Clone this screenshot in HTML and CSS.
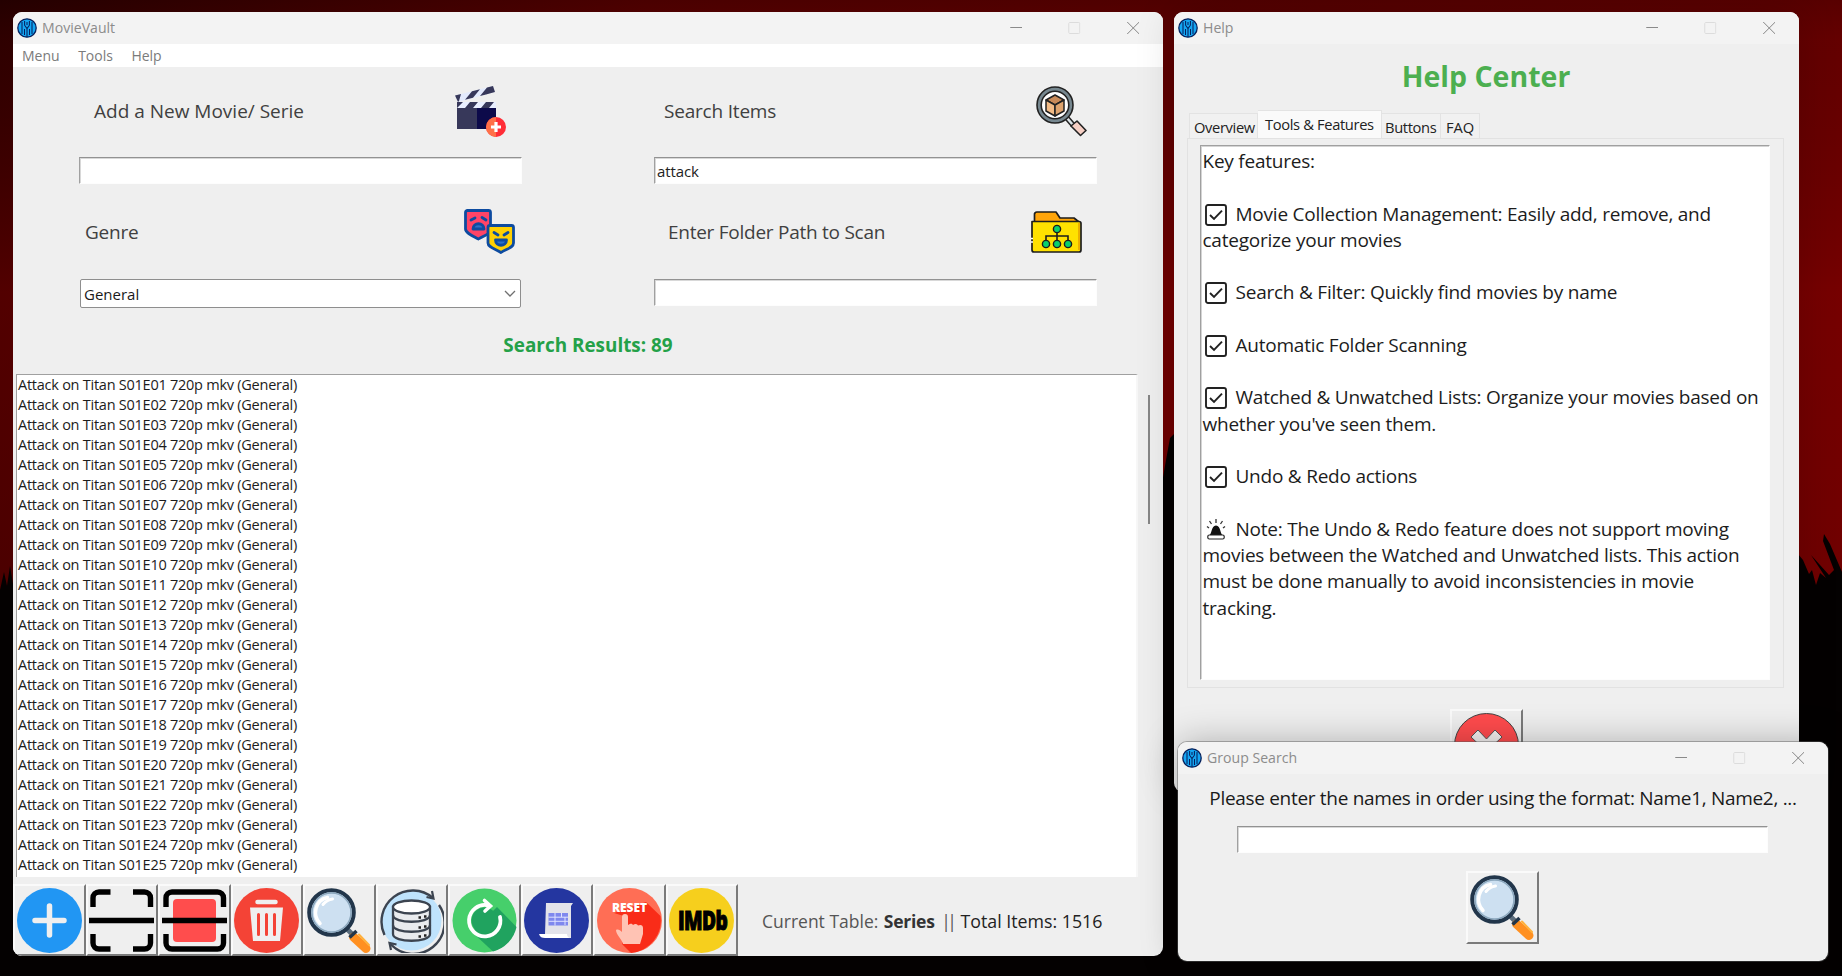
FILE: index.html
```html
<!DOCTYPE html>
<html lang="en">
<head>
<meta charset="utf-8">
<title>MovieVault</title>
<link rel="stylesheet" href="styles.css">
</head>
<body>
<svg class="wallpaper" viewBox="0 0 1842 976" preserveAspectRatio="none">
  <defs>
    <linearGradient id="sky" x1="0" x2="1" y1="0" y2="0"><stop offset="0" stop-color="#290000"/><stop offset=".35" stop-color="#540000"/><stop offset="1" stop-color="#640000"/></linearGradient>
    <linearGradient id="shade" x1="0" x2="0" y1="0" y2="1"><stop offset="0" stop-color="#000" stop-opacity=".12"/><stop offset=".04" stop-color="#600000" stop-opacity=".1"/><stop offset=".3" stop-color="#900000" stop-opacity=".4"/><stop offset=".6" stop-color="#800000" stop-opacity=".4"/></linearGradient>
  </defs>
  <rect width="1842" height="976" fill="url(#sky)"/>
  <rect width="1842" height="976" fill="url(#shade)"/>
  <path fill="#040101" d="M0 976V590L4 572 7 586 10 566 14 590H1160V495L1166 460 1170 438 1176 432V554H1798L1803 560 1809 574 1812 570 1816 585 1820 573 1826 578 1811 555 1829 575 1834 570 1823 541 1824 534 1830 544 1842 572V976z"/>
</svg>

<svg class="defs" width="0" height="0">
  <symbol id="logo" viewBox="0 0 20 20">
    <circle cx="10" cy="10" r="9.200" fill="#14a5f2" stroke="#06205c" stroke-width="1.300"/>
    <path d="M5 4v12M7.600 3v4.200L10 10.500l2.400-3.300V3M15 4v12M10 10.500V19M10 4v3M7.500 11v6M12.500 11v6" fill="none" stroke="#06205c" stroke-width="1.050"/>
  </symbol>
  <symbol id="min" viewBox="0 0 12 12"><path d="M0 5.500h12" stroke="#8a8a8a" fill="none"/></symbol>
  <symbol id="max" viewBox="0 0 12 12"><rect x=".5" y=".5" width="11" height="11" rx="1" stroke="#dcdcdc" fill="none"/></symbol>
  <symbol id="close" viewBox="0 0 12 12"><path d="M0 0l12 12M12 0L0 12" stroke="#858585" fill="none"/></symbol>
  <symbol id="check" viewBox="0 0 22 22"><rect x="1" y="1" width="20" height="20" rx="2" fill="#fff" stroke="#222" stroke-width="1.900"/><path d="M5 11l4 4 8-8.400" fill="none" stroke="#222" stroke-width="1.900"/></symbol>
  <symbol id="lens" viewBox="0 0 65 65">
    <path d="M40 41l7 7" stroke="#5b6d7d" stroke-width="5"/>
    <path d="M46.500 49L59 60.500" stroke="#ff9021" stroke-width="9" stroke-linecap="round"/>
    <path d="M42.500 49.500l7-6.500" stroke="#22364b" stroke-width="3.500"/>
    <path d="M52 46.500l10 10.500" stroke="#ffb13c" stroke-width="2" fill="none" stroke-linecap="round"/>
    <circle cx="24.500" cy="24.500" r="22.300" fill="#cde0f1" stroke="#22364b" stroke-width="4"/>
    <circle cx="24.500" cy="24.500" r="19.500" fill="none" stroke="#8ba7bd" stroke-width="1.500"/>
    <path d="M13 35.500C5 27 8 12 20.500 9.500" stroke="#fff" stroke-width="3.500" fill="none" stroke-linecap="round"/>
    <path d="M16 16.500c2.500-3 6-5 9.500-5.500" stroke="#fff" stroke-width="3" fill="none" stroke-linecap="round"/>
  </symbol>
</svg>

<main class="window main-window">
  <header class="titlebar">
    <svg class="logo"><use href="#logo"/></svg><span class="title">MovieVault</span>
    <div class="controls"><svg><use href="#min"/></svg><svg><use href="#max"/></svg><svg><use href="#close"/></svg></div>
  </header>
  <nav class="menubar"><span>Menu</span><span>Tools</span><span>Help</span></nav>

  <section class="form">
    <div class="column">
      <div class="field-head add"><label>Add a New Movie/ Serie</label>
        <svg width="51" height="51" viewBox="0 0 51 51">
          <path d="M2 21h39v22H2z" fill="#37385a"/><path d="M22 21h19v22H22z" fill="#0c0a4a"/>
          <path d="M2 16h39v6H2z" fill="#e9efff"/>
          <path d="M2 22v-6h6zM10 22l5-6h8l-5 6zM26 22l5-6h8l-5 6z" fill="#37385a"/>
          <path d="M0 9.500L38 0l2 6L3 16z" fill="#e3eafd"/>
          <path d="M0 9.500l6-1.500-2 7-1 1zM17 5.200l8-2-7 8.500-8 2zM32 1.500L38 0l2 6-9 2.500-6 1.500z" fill="#37385a"/>
          <circle cx="41" cy="41" r="10" fill="#ff2d37"/><path d="M41 31a10 10 0 0 0 0 20z" fill="#ff7048"/>
          <path d="M41 36v10M36 41h10" stroke="#fff" stroke-width="3.200"/>
        </svg>
      </div>
      <div class="entry"></div>
      <div class="field-head genre"><label>Genre</label>
        <svg width="51" height="45" viewBox="0 0 51 45">
          <g stroke="#0d4ba0" stroke-width="2.800" stroke-linejoin="round" stroke-linecap="round">
            <path d="M3.500 1.500h21a2 2 0 0 1 2 2V22c0 3-8 5-12 8C9 27 1.500 24 1.500 20V3.500a2 2 0 0 1 2-2z" fill="#ff4467"/>
            <path d="M7 11l4-2M18 8.500l4 2.500" fill="none"/><path d="M9 20c0-7 11-7 11 0z" fill="#2a70c8"/>
            <path d="M26 16.500h21.500a2 2 0 0 1 2 2V34c0 5-8 6-12.500 9.500C32 40 24 38.500 24 34V18.500a2 2 0 0 1 2-2z" fill="#ffd002"/>
            <path d="M30 23.500l4 2.500M44 23.500L40 26" fill="none"/><path d="M31.500 31h11c0 7-11 7-11 0z" fill="#2a70c8"/>
          </g>
        </svg>
      </div>
      <div class="combo"><span>General</span><svg width="12" height="8" viewBox="0 0 12 8"><path d="M1 1l5 5 5-5" fill="none" stroke="#707070" stroke-width="1.300"/></svg></div>
    </div>
    <div class="column">
      <div class="field-head search"><label>Search Items</label>
        <svg width="51" height="51" viewBox="0 0 51 51">
          <path d="M31 32l6 7" stroke="#222" stroke-width="5.500"/><path d="M31 32l6 7" stroke="#dfe6ea" stroke-width="2.500"/>
          <path d="M35 40l6-5 9 9.500-5.500 5z" fill="#f6cfc4" stroke="#222" stroke-width="1.600" stroke-linejoin="round"/>
          <circle cx="19" cy="19" r="18" fill="#76878f" stroke="#222" stroke-width="1.600"/>
          <circle cx="19" cy="19" r="13.800" fill="#fff" stroke="#222" stroke-width="1.600"/>
          <g stroke="#222" stroke-width="1.500" stroke-linejoin="round"><path d="M10 14l9-5 9 5-9 5z" fill="#c98a58"/><path d="M10 14l9 5v11l-9-5z" fill="#f2bb86"/><path d="M28 14l-9 5v11l9-5z" fill="#dda36e"/></g>
        </svg>
      </div>
      <div class="entry">attack</div>
      <div class="field-head path"><label>Enter Folder Path to Scan</label>
        <svg width="51" height="42" viewBox="0 0 51 42">
          <path d="M3.500 10V4a2.500 2.500 0 0 1 2.500-3h19l4 6h14l5 4v5H3.500z" fill="#ffa50a" stroke="#1d1d1d" stroke-width="1.700" stroke-linejoin="round"/>
          <path d="M1 10.500h47a2 2 0 0 1 2 2V39a2 2 0 0 1-2 2H3a2 2 0 0 1-2-2z" fill="#ffe100" stroke="#1d1d1d" stroke-width="1.700" stroke-linejoin="round"/>
          <path d="M48 12v27" stroke="#e8a300" stroke-width="1.600"/><path d="M0 27.500h2M0 31h2" stroke="#fff" stroke-width="1.600"/>
          <path d="M26 19v12M15 31v-6h22v6" fill="none" stroke="#1d1d1d" stroke-width="1.600"/>
          <g fill="#08d06c" stroke="#1d1d1d" stroke-width="1.400"><circle cx="26" cy="18" r="3.600"/><circle cx="15" cy="33" r="3.600"/><circle cx="26" cy="33" r="3.600"/><circle cx="37" cy="33" r="3.600"/></g>
        </svg>
      </div>
      <div class="entry"></div>
    </div>
  </section>

  <div class="result-count">Search Results: 89</div>

  <section class="results">
    <ul class="list">
      <li>Attack on Titan S01E01 720p mkv (General)</li>
      <li>Attack on Titan S01E02 720p mkv (General)</li>
      <li>Attack on Titan S01E03 720p mkv (General)</li>
      <li>Attack on Titan S01E04 720p mkv (General)</li>
      <li>Attack on Titan S01E05 720p mkv (General)</li>
      <li>Attack on Titan S01E06 720p mkv (General)</li>
      <li>Attack on Titan S01E07 720p mkv (General)</li>
      <li>Attack on Titan S01E08 720p mkv (General)</li>
      <li>Attack on Titan S01E09 720p mkv (General)</li>
      <li>Attack on Titan S01E10 720p mkv (General)</li>
      <li>Attack on Titan S01E11 720p mkv (General)</li>
      <li>Attack on Titan S01E12 720p mkv (General)</li>
      <li>Attack on Titan S01E13 720p mkv (General)</li>
      <li>Attack on Titan S01E14 720p mkv (General)</li>
      <li>Attack on Titan S01E15 720p mkv (General)</li>
      <li>Attack on Titan S01E16 720p mkv (General)</li>
      <li>Attack on Titan S01E17 720p mkv (General)</li>
      <li>Attack on Titan S01E18 720p mkv (General)</li>
      <li>Attack on Titan S01E19 720p mkv (General)</li>
      <li>Attack on Titan S01E20 720p mkv (General)</li>
      <li>Attack on Titan S01E21 720p mkv (General)</li>
      <li>Attack on Titan S01E22 720p mkv (General)</li>
      <li>Attack on Titan S01E23 720p mkv (General)</li>
      <li>Attack on Titan S01E24 720p mkv (General)</li>
      <li>Attack on Titan S01E25 720p mkv (General)</li>
    </ul>
    <div class="scrollbar"><div class="thumb"></div></div>
  </section>

  <footer class="toolbar">
    <button class="tool"><svg viewBox="0 0 65 65"><circle cx="32.500" cy="32.500" r="32.500" fill="#2196f3"/><path d="M32.500 18v29M18 32.500h29" stroke="#efefef" stroke-width="5.500" stroke-linecap="round"/></svg></button>
    <button class="tool"><svg viewBox="0 0 65 65"><path d="M4 19V10a6 6 0 0 1 6-6h11.500M44 4h11.500a6 6 0 0 1 6 6v9M61.500 46v9a6 6 0 0 1-6 6H44M21.500 61H10a6 6 0 0 1-6-6v-9M0 32.500h65" fill="none" stroke="#000" stroke-width="5.400"/></svg></button>
    <button class="tool"><svg viewBox="0 0 65 65"><rect x="11" y="11" width="43" height="43" rx="4" fill="#ff4d4d"/><path d="M4 19V10a6 6 0 0 1 6-6h45.500a6 6 0 0 1 6 6v9M61.500 46v9a6 6 0 0 1-6 6H10a6 6 0 0 1-6-6v-9M0 32.500h65" fill="none" stroke="#000" stroke-width="5.400"/></svg></button>
    <button class="tool"><svg viewBox="0 0 65 65"><circle cx="32.500" cy="32.500" r="32.500" fill="#f44336"/><path d="M23.500 14h18" stroke="#efefef" stroke-width="4.500" stroke-linecap="round"/><path d="M16 19.500h33L46 53H19z" fill="#efefef"/><path d="M24.500 26.500v20M32.500 26.500v20M40.500 26.500v20" stroke="#f44336" stroke-width="3" stroke-linecap="round"/></svg></button>
    <button class="tool"><svg><use href="#lens"/></svg></button>
    <button class="tool"><svg viewBox="0 0 65 65">
      <circle cx="32.500" cy="32.500" r="30" fill="#bfe3fc"/>
      <path d="M5.500 47A31.200 31.200 0 0 1 54 10M60 17A31.200 31.200 0 0 1 11.500 56" fill="none" stroke="#3c4450" stroke-width="2.400"/>
      <path d="M53 3l1.500 7.500-7-1.500M12 62l-1.500-7 7 1.500" fill="none" stroke="#3c4450" stroke-width="2.200"/>
      <g stroke="#3c4450" stroke-width="2.300"><path d="M14 19v27c0 9 37 9 37 0V19z" fill="#e9ebee"/><ellipse cx="32.500" cy="19" rx="18.500" ry="6.500" fill="#fff"/><path d="M14 27c0 9 37 9 37 0M14 37c0 9 37 9 37 0" fill="none"/></g>
      <path d="M39.500 29.500h2.500M45 28.500h2.500M39.500 39.500h2.500M45 38.500h2.500M39.500 48.500h2.500M45 47.500h2.500" stroke="#222" stroke-width="2.500"/>
    </svg></button>
    <button class="tool"><svg viewBox="0 0 65 65"><circle cx="32.500" cy="32.500" r="32" fill="#46cf6b"/><path d="M45 19l19.500 20A32 32 0 0 1 41 63.500L20 44z" fill="#20a35f"/><circle cx="32.500" cy="32.500" r="13" fill="#20a35f"/><path d="M36 17.300A15.700 15.700 0 1 0 48 29" fill="none" stroke="#fff" stroke-width="3.800" stroke-linecap="round"/><path d="M32.500 12.500l6 5.500-5.500 5" fill="none" stroke="#fff" stroke-width="3.600" stroke-linecap="round"/></svg></button>
    <button class="tool"><svg viewBox="0 0 65 65"><circle cx="32.500" cy="32.500" r="32.500" fill="#2436a0"/><path d="M22 15h27l-2 3v32H25V46h-4z" fill="#e3e3ea"/><path d="M15 46h28c0 2 1 4 4 4H21c-3 0-5-1-6-4z" fill="#fff"/><rect x="24.500" y="25" width="19.500" height="12.500" fill="#7f88ee"/><path d="M24.500 29.200h19.500M24.500 33.300h19.500M31 25v12.500M37.500 25v4M41 29v8" stroke="#dfe2ff" stroke-width="1"/></svg></button>
    <button class="tool"><svg viewBox="0 0 65 65"><circle cx="32.500" cy="32.500" r="32.500" fill="#ff6e55"/><path d="M49 14l14.500 14A32.500 32.500 0 0 1 34 65l-9-9 5-27-13-4z" fill="#f92c18"/><text class="reset" x="15" y="23.500" textLength="35">RESET</text><path d="M25 29a3 3 0 0 1 6 0v8c3-2 4-1.500 5 0 2-1.500 4-1 5 .5 3-1.500 5 0 5 2.500v6l-3 10H26c-1-5-7-9-7-14 2-1 4 0 6 2z" fill="#ffc3b4"/></svg></button>
    <button class="tool"><svg viewBox="0 0 65 65"><circle cx="32.500" cy="32.500" r="32.500" fill="#f6cf1d"/><text class="imdb" transform="translate(9 42) scale(.74 1)">IMDb</text></svg></button>
    <p class="status">Current Table: <b>Series</b> <i>||</i><span>Total Items: 1516</span></p>
  </footer>
</main>

<section class="window help-window">
  <header class="titlebar">
    <svg class="logo"><use href="#logo"/></svg><span class="title">Help</span>
    <div class="controls"><svg><use href="#min"/></svg><svg><use href="#max"/></svg><svg><use href="#close"/></svg></div>
  </header>
  <h1>Help Center</h1>
  <div class="tabs"><span class="tab overview">Overview</span><span class="tab active">Tools &amp; Features</span><span class="tab buttons">Buttons</span><span class="tab faq">FAQ</span></div>
  <div class="pane"><div class="text">Key features:

<svg class="mark"><use href="#check"/></svg>Movie Collection Management: Easily add, remove, and
categorize your movies

<svg class="mark"><use href="#check"/></svg>Search &amp; Filter: Quickly find movies by name

<svg class="mark"><use href="#check"/></svg>Automatic Folder Scanning

<svg class="mark"><use href="#check"/></svg>Watched &amp; Unwatched Lists: Organize your movies based on
whether you've seen them.

<svg class="mark"><use href="#check"/></svg>Undo &amp; Redo actions

<svg class="mark" viewBox="0 0 22 22"><path d="M4 16.500c3-1 2-10 7-10s4 9 7 10z" fill="#111"/><rect x="2.800" y="16" width="16.400" height="4" rx="1.500" fill="#fff" stroke="#222" stroke-width="1.200"/><path d="M11 4V0M6.500 5l-2-3M15.500 5l2-3M4 9L2 7.500M18 9l2-1.500" stroke="#333" stroke-width="1.300"/></svg>Note: The Undo &amp; Redo feature does not support moving
movies between the Watched and Unwatched lists. This action
must be done manually to avoid inconsistencies in movie
tracking.</div></div>
  <button class="tool dismiss"><svg viewBox="0 0 65 65"><circle cx="32.500" cy="32.500" r="32" fill="#ff4b4d" stroke="#444" stroke-width="1"/><path d="M24 17l8.500 9 8.500-9 7 7-9 8.500 9 8.500-7 7-8.500-9-8.500 9-7-7 9-8.500-9-8.500z" fill="#f4f1f0" stroke="#555"/></svg></button>
</section>

<section class="window group-window">
  <header class="titlebar">
    <svg class="logo"><use href="#logo"/></svg><span class="title">Group Search</span>
    <div class="controls"><svg><use href="#min"/></svg><svg><use href="#max"/></svg><svg><use href="#close"/></svg></div>
  </header>
  <p class="prompt">Please enter the names in order using the format: Name1, Name2, ...</p>
  <div class="entry"></div>
  <button class="tool"><svg><use href="#lens"/></svg></button>
</section>
</body>
</html>
```
FILE: styles.css
```css
* { box-sizing: border-box; }
body { margin: 0; width: 1842px; height: 976px; overflow: hidden; position: relative; background: #050101; font-family: "Open Sans", "Noto Sans", sans-serif; color: #1a1a1a; }
.wallpaper { display: block; width: 1842px; height: 976px; }
.defs { position: absolute; }

/* windows */
.window { position: absolute; display: flex; flex-direction: column; overflow: hidden; background: #efefef; border-radius: 9px; }
.main-window { left: 13px; top: 12px; width: 1150px; height: 944px; }
.help-window { left: 1174px; top: 12px; width: 625px; height: 780px; align-items: center; box-shadow: 0 0 40px rgba(0,0,0,.14); }
.group-window { left: 1178px; top: 742px; width: 650px; height: 219px; align-items: center; box-shadow: 0 0 0 1px rgba(90,90,90,.45), 0 0 36px rgba(0,0,0,.28); }

.titlebar { width: 100%; flex: 0 0 32px; display: flex; align-items: center; padding: 0 24px 0 4px; background: #f3f3f3; }
.logo { width: 20px; height: 20px; margin-top: -1px; }
.title { margin-left: 5px; font-size: 14.100px; line-height: 20px; color: #8c8c8c; }
.controls { margin-left: auto; display: flex; gap: 46px; }
.controls svg { width: 12.500px; height: 12px; }

.menubar { flex: 0 0 23px; display: flex; align-items: center; gap: 18.500px; padding: 1px 0 0 9px; background: #fff; font-size: 14px; line-height: 20px; color: #7b7b7b; }

/* form */
.form { display: flex; gap: 132px; padding-left: 66px; height: 241px; flex: none; }
.column { width: 443px; }
.field-head { height: 90px; display: flex; align-items: center; justify-content: space-between; font-size: 19px; color: #404040; }
.field-head label { margin-top: 0; }
.add { padding: 0 16px 2px 15px; }
.search { padding: 0 10px 2px; letter-spacing: -.2px; }
.genre { height: 95px; padding: 0 7px 0 6px; letter-spacing: -.25px; }
.path { height: 95px; padding: 0 15px 0 14px; letter-spacing: -.26px; }
.entry { height: 27px; background: #fff; border-style: solid; border-width: 1px; border-color: #929292 #fdfdfd #fdfdfd #a0a0a0; box-shadow: inset 1px 1px 0 #d8d8d8; padding-left: 2px; font-size: 15px; line-height: 26px; color: #222; letter-spacing: -.1px; }
.combo { height: 29px; margin: 0 1px; display: flex; align-items: center; justify-content: space-between; padding: 0 4px 0 3px; background: #fff; border: 1px solid #8e8e8e; border-radius: 2px; font-size: 15px; color: #1a1a1a; }

.result-count { flex: none; height: 66px; padding-top: 6px; text-align: center; font-size: 18.900px; line-height: 62px; font-weight: 700; color: #24a148; }

/* results list */
.results { flex: none; height: 503px; display: flex; padding-left: 3px; }
.list { width: 1122px; height: 503px; margin: 0; padding: 0 0 0 1px; list-style: none; background: #fff; border-style: solid; border-width: 1px 2px 0 1px; border-color: #a0a0a0 #f7f7f7 #f7f7f7 #a0a0a0; font-size: 14.500px; letter-spacing: -.25px; line-height: 20px; color: #1c1c1c; overflow: hidden; }
.list li { white-space: nowrap; }
.scrollbar { width: 22px; display: flex; justify-content: center; padding-top: 21px; }
.thumb { width: 2px; height: 129px; background: #868686; }

/* toolbar */
.toolbar { flex: none; display: flex; padding-top: 7px; }
.tool { flex: none; width: 72.500px; height: 72px; padding: 0; display: flex; align-items: center; justify-content: center; background: #efefef; border-style: solid; border-width: 2px; border-color: #fafafa #7a7a7a #7a7a7a #fafafa; }
.tool svg { width: 65px; height: 65px; flex: none; }
.status { margin: 0 0 0 24px; font-size: 17.500px; line-height: 74px; color: #555; white-space: pre; }
.status b { color: #333; margin: 0 2px 0 1px; letter-spacing: -.25px; }
.status i { font-style: normal; letter-spacing: -3.500px; margin-right: 7px; }
.status span { color: #222; font-size: 17.800px; }
.reset { font: 800 12px "Open Sans", sans-serif; fill: #fff; }
.imdb { font: 800 26px "Open Sans", sans-serif; fill: #000; stroke: #000; stroke-width: 1; letter-spacing: -.8px; }

/* help window */
.help-window h1 { margin: 0; flex: none; height: 66px; line-height: 64px; padding-right: 1px; font-size: 28.500px; font-weight: 700; color: #4caf50; }
.tabs { align-self: flex-start; flex: none; height: 28px; margin-left: 15px; display: flex; align-items: flex-end; }
.tab { height: 25px; padding: 0 7px 0 4px; line-height: 27px; font-size: 14.700px; letter-spacing: -.35px; background: #f1f1f1; border: 1px solid #e3e3e3; border-bottom: 0; border-left-width: 0; color: #222; white-space: nowrap; }
.overview { width: 69px; border-left-width: 1px; }
.active { width: 124px; height: 28px; padding-left: 7px; background: #fafafa; }
.buttons { width: 59px; padding-left: 3px; }
.faq { width: 39px; padding-left: 5px; letter-spacing: -.1px; }
.pane { width: 597px; height: 550px; flex: none; margin-right: 3px; padding: 6px 13px 8px 12px; border: 1px solid #e2e2e2; }
.text { height: 535px; background: #fff; border-style: solid; border-width: 1px; border-color: #a0a0a0 #fdfdfd #fdfdfd #a0a0a0; box-shadow: inset 1px 1px 0 #d4d4d4; padding: 2px 0 0 2px; font-size: 19px; letter-spacing: -.23px; line-height: 26.270px; white-space: pre; color: #1c1c1c; }
.mark { width: 22px; height: 22px; margin: 0 9px 0 2px; vertical-align: -5px; }
.dismiss { margin-top: 21px; }

/* group search window */
.group-window .prompt { margin: 0; flex: none; height: 52px; line-height: 48px; font-size: 19px; letter-spacing: -.31px; white-space: nowrap; }
.group-window .entry { width: 531px; flex: none; margin-right: 1px; }
.group-window .tool { margin: 18px 1px 0 0; height: 73px; }
```
